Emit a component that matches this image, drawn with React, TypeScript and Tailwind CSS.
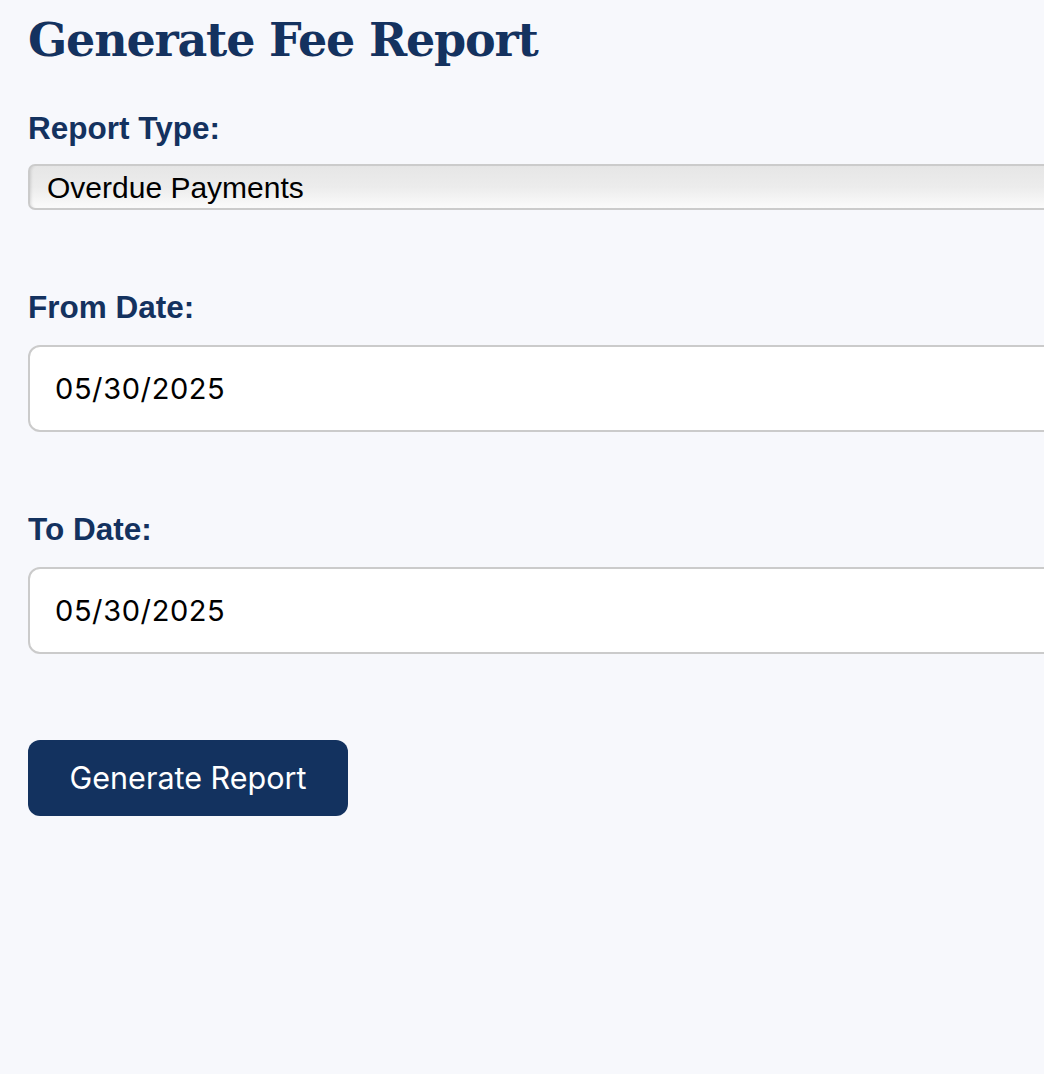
import {useState} from "react";

function Label({children, gap}: {children: string, gap: string}) {
    return (
        <label className={"block text-[31.5px] leading-[36px] font-bold text-[#14325f] font-['Liberation_Sans',Arial,sans-serif] " + gap}>
            {children}
        </label>
    )
}

function DateField({value}: {value: string}) {
    return (
        <div className="h-[87px] w-[1100px] rounded-[12px] border-2 border-[#cbcbcb] bg-white flex items-center pl-[25px]">
            <span className="text-[29px] text-black tracking-[0.6px] font-['Inter',sans-serif]">{value}</span>
        </div>
    )
}

export default function App() {
    const [reportType] = useState<string>("Overdue Payments")

    return (
        <div className="min-h-screen w-full overflow-hidden bg-[#f7f8fc]">
            <div className="pl-[28px] pt-[10px]">
                <h1 className="text-[46px] leading-[60px] font-bold text-[#14325f] font-['DejaVu_Serif',Georgia,serif] tracking-[-1.2px]">
                    Generate Fee Report
                </h1>

                <div className="mt-[40px]">
                    <Label gap="mb-[18px]">Report Type:</Label>
                    <div className="h-[46px] w-[1100px] rounded-[7px] border-2 border-[#cbcbcb] bg-gradient-to-b from-[#e6e6e6] via-[#ececec] to-[#fbfbfb] flex items-center pl-[17px] shadow-[inset_3px_0_3px_-2px_rgba(0,0,0,0.12)]">
                        <span className="text-[30px] text-black font-['Liberation_Sans',Arial,sans-serif]">{reportType}</span>
                    </div>
                </div>

                <div className="mt-[79px]">
                    <Label gap="mb-[20px]">From Date:</Label>
                    <DateField value="05/30/2025"/>
                </div>

                <div className="mt-[79px]">
                    <Label gap="mb-[20px]">To Date:</Label>
                    <DateField value="05/30/2025"/>
                </div>

                <button className="mt-[86px] w-[320px] h-[76px] rounded-[12px] bg-[#13325f] text-white text-[30.5px] font-['Inter',sans-serif]">
                    Generate Report
                </button>
            </div>
        </div>
    )
}
